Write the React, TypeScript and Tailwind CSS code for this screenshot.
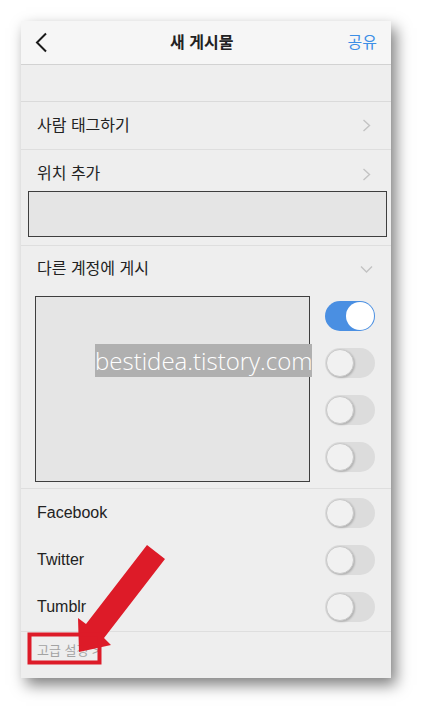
import React from 'react';

const font = { fontFamily: '"Liberation Sans", "Noto Sans CJK KR", sans-serif' };

const Toggle = ({ on = false }: { on?: boolean }) => (
  <div
    className={`relative w-[50px] h-[30px] rounded-full ${
      on ? 'bg-[#4a8fe2]' : 'bg-[#dcdcdc]'
    }`}
  >
    <div
      className={`absolute top-[1px] w-[28px] h-[28px] rounded-full ${
        on
          ? 'right-[1px] bg-white'
          : 'left-[1px] bg-[#f1f1f1] border border-[#c9c9c9] shadow-[1px_1px_2px_rgba(0,0,0,0.2)]'
      }`}
    />
  </div>
);

const ChevronRight = () => (
  <svg width="9" height="13" viewBox="0 0 9 13" fill="none">
    <path d="M1.5 1 L7.5 6.5 L1.5 12" stroke="#c3c3c3" strokeWidth="1.4" />
  </svg>
);

const App = () => {
  return (
    <div className="relative w-[433px] h-[721px] bg-white pt-[21px] pl-[21px]" style={font}>
      {/* phone screen */}
      <div className="w-[370px] h-[657px] bg-[#eeeeee] shadow-[5px_7px_14px_rgba(0,0,0,0.5)] flex flex-col text-[#222222]">
        {/* header */}
        <div className="h-[44px] shrink-0 flex items-center justify-between px-[14px] bg-[#f6f6f6] border-b border-[#d2d2d2]">
          <svg width="13" height="21" viewBox="0 0 13 21" fill="none">
            <path d="M11 1.5 L2 10.5 L11 19.5" stroke="#1a1a1a" strokeWidth="2" />
          </svg>
          <span className="text-[16px] font-bold leading-none pl-[8px]">새 게시물</span>
          <span className="text-[16px] leading-none text-[#3c8ee6]">공유</span>
        </div>

        {/* empty band */}
        <div className="h-[37px] shrink-0 border-b border-[#dadada]" />

        {/* tag people */}
        <div className="h-[48px] shrink-0 flex items-center justify-between pl-[16px] pr-[20px] border-b border-[#dedede]">
          <span className="text-[16px] leading-[18px]">사람 태그하기</span>
          <ChevronRight />
        </div>

        {/* location */}
        <div className="h-[96px] shrink-0 flex flex-col border-b border-[#dedede]">
          <div className="flex items-center justify-between pl-[16px] pr-[20px] pt-[15px] h-[33px]">
            <span className="text-[16px] leading-[18px]">위치 추가</span>
            <ChevronRight />
          </div>
          <div className="mt-[8px] ml-[7px] mr-[4px] h-[46px] bg-[#e5e5e5] border-[1.5px] border-[#3e3e3e]" />
        </div>

        {/* other accounts */}
        <div className="h-[243px] shrink-0 flex flex-col border-b border-[#dedede]">
          <div className="flex items-center justify-between pl-[16px] pr-[18px] pt-[14px] h-[32px]">
            <span className="text-[16px] leading-[18px]">다른 계정에 게시</span>
            <svg width="13" height="9" viewBox="0 0 13 9" fill="none">
              <path d="M1 1.5 L6.5 7 L12 1.5" stroke="#c3c3c3" strokeWidth="1.4" />
            </svg>
          </div>
          <div className="mt-[18px] flex justify-between pl-[14px] pr-[16px]">
            <div className="w-[275px] h-[186px] bg-[#e5e5e5] border-[1.5px] border-[#3e3e3e]" />
            <div className="flex flex-col gap-[17px] pt-[5px]">
              <Toggle on />
              <Toggle />
              <Toggle />
              <Toggle />
            </div>
          </div>
        </div>

        {/* networks */}
        <div className="h-[143px] shrink-0 flex flex-col border-b border-[#dedede]">
          {['Facebook', 'Twitter', 'Tumblr'].map((name) => (
            <div key={name} className="flex-1 flex items-center justify-between pl-[16px] pr-[16px]">
              <span className="text-[16px] leading-[18px]">{name}</span>
              <Toggle />
            </div>
          ))}
        </div>

        {/* advanced */}
        <div className="pl-[16px] pt-[6px]">
          <span className="text-[13px] leading-[16px] text-[#a3a3a3]">고급 설정 &gt;</span>
        </div>
      </div>

      {/* watermark */}
      <div
        className="absolute left-[95px] top-[344px] w-[217px] h-[33px] bg-[#b0b0b0] text-white text-[24px] font-light leading-[34px] whitespace-nowrap overflow-hidden"
        style={{ fontFamily: '"Open Sans", sans-serif' }}
      >
        bestidea.tistory.com
      </div>

      {/* annotation */}
      <svg className="absolute left-0 top-0" width="433" height="721" viewBox="0 0 433 721">
        <polygon
          points="147,545 165,559 104,638 111,645 79,652 78,618 86,624"
          fill="#dd1b28"
        />
        <rect x="29.5" y="634.5" width="70" height="28" fill="none" stroke="#dd1b28" strokeWidth="4" />
      </svg>
    </div>
  );
};

export default App;
